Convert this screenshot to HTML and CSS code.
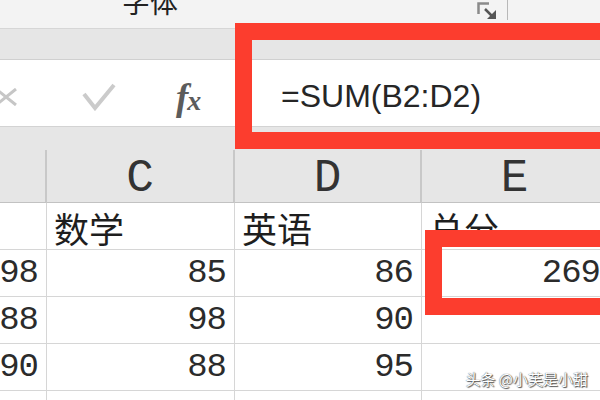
FILE: index.html
```html
<!doctype html>
<html lang="zh-CN">
    <head>
        <meta charset="UTF-8" />
        <title>SUM 公式</title>
        <link rel="stylesheet" href="styles.css">
    </head>
    <body>
        <div class="app">
            <div class="ribbon">
                <span class="group-label">字体</span>
                <span class="launcher">
                    <svg width="20" height="18" viewBox="0 0 20 18">
                        <path d="M1.5 12 V1.5 H12" fill="none" stroke="#8a8a8a" stroke-width="2.5" />
                        <path d="M8 7 L15 14" stroke="#555" stroke-width="2.5" />
                        <polygon points="19,17 10,17 19,8" fill="#555" />
                    </svg>
                </span>
                <span class="ribbon-sep"></span>
            </div>
            <div class="strip"></div>
            <div class="formula-bar">
                <div class="fb-buttons">
                    <svg class="fb-cancel" width="22" height="18" viewBox="0 0 22 18">
                        <path d="M1 1 L21 17 M21 1 L1 17" stroke="#c6c6c6" stroke-width="3" />
                    </svg>
                    <svg class="fb-enter" width="34" height="28" viewBox="0 0 34 28">
                        <path d="M2 11 L13 25 L32 2" fill="none" stroke="#cbcbcb" stroke-width="4" />
                    </svg>
                    <span class="fb-fx">f<span class="fx-x">x</span></span>
                </div>
                <div class="fb-input">=SUM(B2:D2)</div>
            </div>
            <div class="strip strip-low"></div>
            <div class="sheet">
                <div class="cell col-head"></div>
                <div class="cell col-head">C</div>
                <div class="cell col-head">D</div>
                <div class="cell col-head">E</div>

                <div class="cell"></div>
                <div class="cell text">数学</div>
                <div class="cell text">英语</div>
                <div class="cell text">总分</div>

                <div class="cell num">98</div>
                <div class="cell num">85</div>
                <div class="cell num">86</div>
                <div class="cell num">269</div>

                <div class="cell num">88</div>
                <div class="cell num">98</div>
                <div class="cell num">90</div>
                <div class="cell num"></div>

                <div class="cell num">90</div>
                <div class="cell num">88</div>
                <div class="cell num">95</div>
                <div class="cell num"></div>

                <div class="cell"></div>
                <div class="cell"></div>
                <div class="cell"></div>
                <div class="cell"></div>
            </div>
            <div class="mark mark-formula"></div>
            <div class="mark mark-cell"></div>
            <div class="watermark">头条 @小芙是小甜</div>
        </div>
    </body>
</html>
```

FILE: styles.css
```css
body {
    margin: 0;
    background: #ffffff;
    font-family: "Liberation Sans", "Noto Sans CJK SC", sans-serif;
}
.app {
    position: relative;
    width: 600px;
    height: 400px;
    overflow: hidden;
}
.ribbon {
    display: flex;
    align-items: flex-start;
    height: 28px;
    padding-right: 92px;
    background: #f3f3f3;
    border-bottom: 1px solid #d6d6d6;
    overflow: hidden;
}
.group-label {
    margin-left: 122px;
    margin-top: -13px;
    font-family: "Noto Sans CJK SC", sans-serif;
    font-size: 28px;
    line-height: 1;
    color: #222;
}
.launcher {
    margin-left: auto;
    margin-top: 2px;
    height: 18px;
}
.ribbon-sep {
    width: 1px;
    height: 20px;
    margin-left: 10px;
    background: #b8b8b8;
}
.strip {
    height: 30px;
    background: #e6e6e6;
    border-bottom: 1px solid #d0d0d0;
}
.strip-low {
    height: 23px;
    border-bottom: none;
}
.formula-bar {
    display: flex;
    align-items: center;
    height: 66px;
    background: #ffffff;
    border-bottom: 1px solid #d3d3d3;
}
.fb-buttons {
    display: flex;
    align-items: center;
    width: 230px;
    padding-top: 8px;
}
.fb-cancel {
    margin-left: -5px;
}
.fb-enter {
    margin-left: 65px;
}
.fb-fx {
    margin-left: 60px;
    font-family: "Liberation Serif", serif;
    font-style: italic;
    font-weight: bold;
    font-size: 37px;
    letter-spacing: -1px;
    color: #5c5c5c;
}
.fx-x {
    font-size: 28px;
}
.fb-input {
    padding-left: 51px;
    padding-top: 6px;
    font-size: 32px;
    color: #262626;
}
.sheet {
    display: grid;
    grid-template-columns: 47px 188px 187px 187px;
    grid-template-rows: 53px;
    grid-auto-rows: 47px;
    width: 609px;
}
.cell {
    border-right: 1px solid #d6d6d6;
    border-bottom: 1px solid #d6d6d6;
    background: #ffffff;
    color: #1e1e1e;
}
.col-head {
    display: flex;
    align-items: flex-end;
    justify-content: center;
    background: #e6e6e6;
    border-right: 2px solid #c8c8c8;
    border-bottom: 1px solid #c2c2c2;
    font-family: "Liberation Mono", monospace;
    font-size: 46px;
    line-height: 1;
    color: #333;
}
.text {
    display: flex;
    align-items: flex-end;
    padding-left: 7px;
    font-family: "Noto Sans CJK SC", sans-serif;
    font-size: 35px;
    line-height: 1.2;
}
.num {
    display: flex;
    align-items: flex-end;
    justify-content: flex-end;
    padding-right: 8px;
    padding-bottom: 2px;
    font-family: "Liberation Mono", monospace;
    font-size: 34px;
    letter-spacing: -1px;
    line-height: 1.2;
    color: #2b2b2b;
}
.mark {
    position: absolute;
    border: 17px solid #fc3d2e;
}
.mark-formula {
    left: 235px;
    top: 23px;
    width: 400px;
    height: 92px;
}
.mark-cell {
    left: 425px;
    top: 230px;
    width: 200px;
    height: 51px;
}
.watermark {
    position: absolute;
    right: 12px;
    bottom: 11px;
    font-family: "Noto Sans CJK SC", sans-serif;
    font-size: 15px;
    color: #ffffff;
    text-shadow: 0 0 1px #333, 1px 1px 1px #555;
}
```
